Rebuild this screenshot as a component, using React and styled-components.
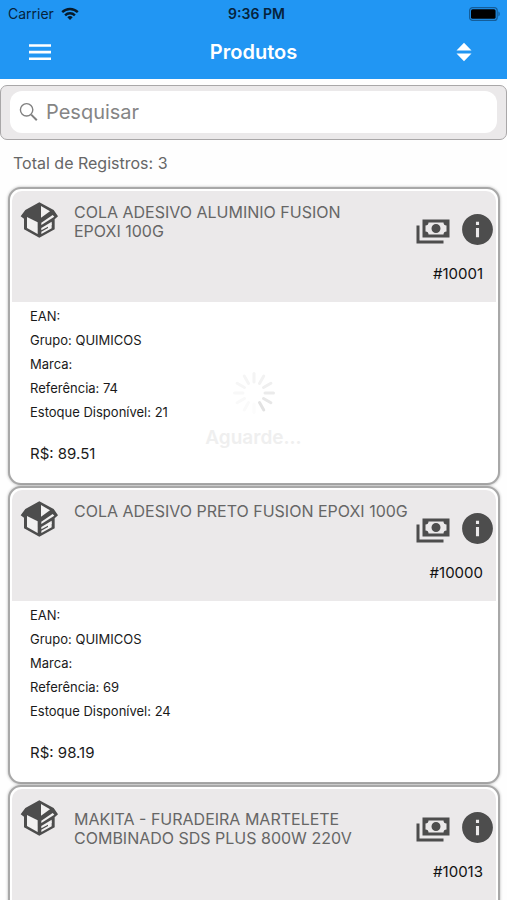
import React from "react";
import styled, { createGlobalStyle } from "styled-components";

const GlobalStyle = createGlobalStyle`
  *, *::before, *::after { box-sizing: border-box; }
  body {
    margin: 0;
    background: #fefefe;
    font-family: Inter, "Liberation Sans", sans-serif;
  }
  h1, h2, p, ul { margin: 0; padding: 0; }
`;

const Screen = styled.div`
  position: relative;
  height: 100vh;
  overflow: hidden;
  background: #fefefe;
`;

const TopBar = styled.header`
  background: #2196f3;
  height: 79px;
`;

const StatusBar = styled.div`
  display: grid;
  grid-template-columns: 1fr auto 1fr;
  align-items: center;
  height: 27px;
  padding: 0 6px 0 8px;
  font-size: 14px;
  line-height: 16px;
  color: #06233c;
`;

const Carrier = styled.span`
  display: flex;
  align-items: center;
  gap: 7px;
`;

const Clock = styled.time`
  font-weight: 600;
  padding-left: 4px;
`;

const BatterySlot = styled.span`
  display: flex;
  justify-content: flex-end;
`;

const NavBar = styled.nav`
  display: grid;
  grid-template-columns: 1fr auto 1fr;
  align-items: center;
  height: 50px;
  padding: 0 28px;
`;

const Title = styled.h1`
  font-size: 20px;
  line-height: 24px;
  font-weight: 600;
  color: #fff;
`;

const IconButton = styled.button`
  display: flex;
  padding: 0;
  border: 0;
  background: none;
  color: ${(p) => p.$color || "#4d4d4d"};
  justify-self: ${(p) => p.$side || "auto"};
  cursor: pointer;
`;

const SearchBar = styled.form`
  margin-top: 6px;
  padding: 5px 9px 6px;
  border: 1px solid #a9a7a8;
  border-radius: 7px;
  background: #ebe9ea;
`;

const SearchField = styled.label`
  display: flex;
  align-items: center;
  gap: 7px;
  height: 42px;
  padding: 0 9px;
  border-radius: 12px;
  background: #fff;
`;

const SearchInput = styled.input`
  flex: 1;
  min-width: 0;
  padding: 0;
  border: 0;
  outline: 0;
  background: none;
  font: 400 20px/24px Inter, "Liberation Sans", sans-serif;
  color: #333;
  &::placeholder { color: #858585; opacity: 1; }
`;

const Total = styled.p`
  padding: 13px 13px 14px;
  font-size: 16px;
  line-height: 20px;
  color: #666;
`;

const List = styled.main`
  display: flex;
  flex-direction: column;
  gap: 1px;
  margin: 0 7px 0 8px;
`;

const Card = styled.article`
  display: flex;
  flex-direction: column;
  flex-shrink: 0;
  min-height: 298px;
  padding: 2px;
  border: 2px solid #a8a8a8;
  border-radius: 13px;
  background: #fff;
  box-shadow: 0 0 3px rgba(0, 0, 0, 0.3);
`;

const CardHead = styled.div`
  display: grid;
  grid-template-columns: 54px 1fr auto;
  height: 111px;
  padding: 10px 0 0 8px;
  border-radius: 10px 10px 0 0;
  background: #ebe9ea;
`;

const Name = styled.h2`
  padding-top: ${(p) => (p.$low ? 11 : 2)}px;
  font-size: 16px;
  line-height: 19px;
  font-weight: 400;
  color: #666;
  white-space: pre-line;
`;

const Side = styled.div`
  display: flex;
  flex-direction: column;
  align-items: flex-end;
  gap: 18px;
  padding-top: 10px;
`;

const Actions = styled.div`
  display: flex;
  align-items: center;
  gap: 8px;
`;

const Code = styled.span`
  padding-right: 13px;
  font-size: 15px;
  line-height: 16px;
  color: #111;
`;

const Details = styled.ul`
  padding: 2px 18px;
  list-style: none;
  font-size: 13px;
  line-height: 24px;
  color: #1a1a1a;
`;

const Price = styled.p`
  padding: 16px 18px 0;
  font-size: 15px;
  line-height: 24px;
  color: #1a1a1a;
`;

const Loading = styled.div`
  position: absolute;
  top: 371px;
  left: 0;
  right: 0;
  display: flex;
  flex-direction: column;
  align-items: center;
  gap: 11px;
  font-size: 19px;
  line-height: 24px;
  font-weight: 600;
  color: #efefef;
  pointer-events: none;
`;

const WifiIcon = () => (
  <svg width="18" height="14" viewBox="0 0 18 14" fill="none" stroke="#071b2b" strokeWidth="2.4" aria-hidden="true">
    <path d="M1.2 5.2a11.2 11.2 0 0 1 15.6 0" />
    <path d="M4.1 8.3a7 7 0 0 1 9.8 0" />
    <path d="M9 13 6.3 10.3a3.9 3.9 0 0 1 5.4 0z" fill="#071b2b" stroke="none" />
  </svg>
);

const BatteryIcon = () => (
  <svg width="32" height="14" viewBox="0 0 32 14" aria-hidden="true">
    <rect x="0.6" y="0.6" width="27.6" height="12.8" rx="3" fill="none" stroke="#145d99" strokeWidth="1.2" />
    <rect x="2" y="2.2" width="24.6" height="9.6" rx="1.6" fill="#000" />
    <path d="M29.4 4.6c1.8.6 1.8 4.2 0 4.8z" fill="#145d99" />
  </svg>
);

const MenuIcon = () => (
  <svg width="24" height="20" viewBox="0 0 24 20" fill="currentColor" aria-hidden="true">
    <path d="M1 2.2h22v2.6H1zM1 8.8h22v2.6H1zM1 15.4h22V18H1z" />
  </svg>
);

const SortIcon = () => (
  <svg width="30" height="20" viewBox="0 0 30 20" fill="currentColor" aria-hidden="true">
    <path d="M15 .8 22.5 8.4h-15zM15 19.2 22.5 11.6h-15z" />
  </svg>
);

const SearchIcon = () => (
  <svg width="20" height="20" viewBox="0 0 20 20" fill="none" stroke="#808080" aria-hidden="true">
    <circle cx="7.6" cy="7.8" r="6.2" strokeWidth="1.4" />
    <path d="m12.2 12.6 5.6 5.6" strokeWidth="2" />
  </svg>
);

const BoxIcon = () => (
  <svg width="39" height="37" viewBox="0 0 117 111" aria-hidden="true">
    <path
      d="M58 4 16 27 2 46l10 7v32l46 25 46-25V55l10-9-13-19z"
      fill="#4d4d4d"
    />
    <path d="M63 15 90 31 63 50z" fill="#f2f1f1" />
    <path d="M21 48 53 64v35L21 81z" fill="#f2f1f1" />
    <path d="M64 65 98 42l5 5-39 25z" fill="#f2f1f1" />
    <path d="M64 81 95 62v9L64 88z" fill="#f2f1f1" />
    <path d="M64 99 95 82V67L84 74v7L64 92z" fill="#f2f1f1" />
  </svg>
);

const CashIcon = () => (
  <svg width="36" height="36" viewBox="0 1 24 24" fill="currentColor" aria-hidden="true">
    <path d="M5 6h18v12H5V6m9 3a3 3 0 0 1 3 3 3 3 0 0 1-3 3 3 3 0 0 1-3-3 3 3 0 0 1 3-3M9 8a2 2 0 0 1-2 2v4a2 2 0 0 1 2 2h10a2 2 0 0 1 2-2v-4a2 2 0 0 1-2-2H9m-8 2h2v10h16v2H1V10z" />
  </svg>
);

const InfoIcon = () => (
  <svg width="37" height="37" viewBox="0 0 24 24" fill="currentColor" aria-hidden="true">
    <path d="M12 2C6.480 2 2 6.480 2 12s4.480 10 10 10 10-4.480 10-10S17.520 2 12 2zm1 15h-2v-6h2v6zm0-8h-2V7h2v2z" />
  </svg>
);

const SPOKES = ["#f4f4f4", "#f2f2f2", "#efefef", "#ebebeb", "#e7e7e7", "#e2e2e2", "#fcfcfc", "#fafafa", "#f9f9f9", "#f8f8f8", "#f6f6f6", "#f5f5f5"];

const Spinner = () => (
  <svg width="44" height="44" viewBox="-22 -22 44 44" strokeWidth="3" strokeLinecap="round" aria-hidden="true">
    {SPOKES.map((c, i) => (
      <path key={i} d="M0-11V-19.500" stroke={c} transform={`rotate(${i * 30})`} />
    ))}
  </svg>
);

const PRODUCTS = [
  { code: "10001", name: "COLA ADESIVO ALUMINIO FUSION\nEPOXI 100G", group: "QUIMICOS", ref: "74", stock: "21", price: "89.51" },
  { code: "10000", name: "COLA ADESIVO PRETO FUSION EPOXI 100G", group: "QUIMICOS", ref: "69", stock: "24", price: "98.19" },
  { code: "10013", name: "MAKITA - FURADEIRA MARTELETE\nCOMBINADO SDS PLUS 800W 220V", low: true },
];

function ProductCard({ product }) {
  return (
    <Card>
      <CardHead>
        <BoxIcon />
        <Name $low={product.low}>{product.name}</Name>
        <Side>
          <Actions>
            <IconButton type="button" aria-label="Preços"><CashIcon /></IconButton>
            <IconButton type="button" aria-label="Informações"><InfoIcon /></IconButton>
          </Actions>
          <Code>#{product.code}</Code>
        </Side>
      </CardHead>
      {product.price && (
        <>
          <Details>
            <li>EAN:</li>
            <li>Grupo: {product.group}</li>
            <li>Marca:</li>
            <li>Referência: {product.ref}</li>
            <li>Estoque Disponível: {product.stock}</li>
          </Details>
          <Price>R$: {product.price}</Price>
        </>
      )}
    </Card>
  );
}

export default function App() {
  return (
    <Screen>
      <GlobalStyle />
      <TopBar>
        <StatusBar>
          <Carrier>Carrier <WifiIcon /></Carrier>
          <Clock>9:36 PM</Clock>
          <BatterySlot><BatteryIcon /></BatterySlot>
        </StatusBar>
        <NavBar>
          <IconButton type="button" $color="#fff" $side="start" aria-label="Menu"><MenuIcon /></IconButton>
          <Title>Produtos</Title>
          <IconButton type="button" $color="#fff" $side="end" aria-label="Ordenar"><SortIcon /></IconButton>
        </NavBar>
      </TopBar>
      <SearchBar role="search">
        <SearchField>
          <SearchIcon />
          <SearchInput type="text" placeholder="Pesquisar" aria-label="Pesquisar" />
        </SearchField>
      </SearchBar>
      <Total>Total de Registros: 3</Total>
      <List>
        {PRODUCTS.map((p) => <ProductCard key={p.code} product={p} />)}
      </List>
      <Loading role="status">
        <Spinner />
        <span>Aguarde...</span>
      </Loading>
    </Screen>
  );
}
